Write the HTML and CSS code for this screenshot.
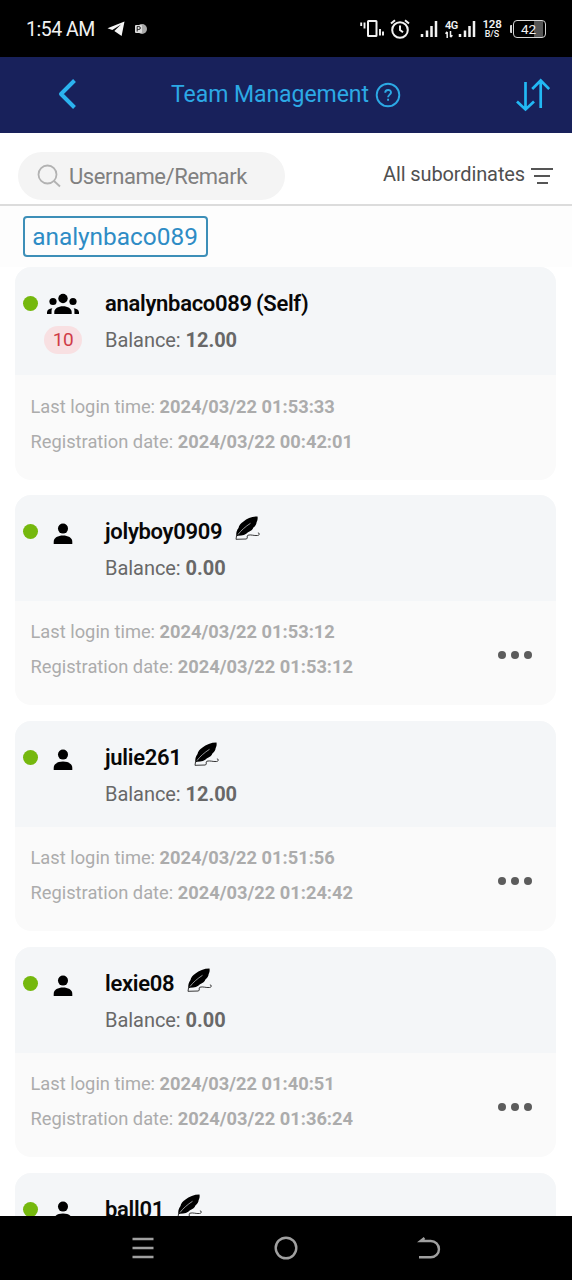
FILE: index.html
```html
<!DOCTYPE html>
<html lang="en">
<head>
    <meta charset="UTF-8">
    <meta name="viewport" content="width=device-width, initial-scale=1.0">
    <title>Team Management</title>
    <link rel="stylesheet" href="styles.css">
</head>
<body>
    <!-- shared icons -->
    <svg class="sprite" width="0" height="0">
        <symbol id="user" viewBox="0 0 20 22">
            <circle cx="10" cy="5.6" r="5"/>
            <path d="M.7 21v-2.2c0-4 4.4-6.2 9.3-6.2s9.3 2.2 9.3 6.2V21z"/>
        </symbol>
        <symbol id="feather" viewBox="0 0 26 26">
            <path d="M22.500.5C17 .5 12 2.500 8.500 5.500 5.500 7.300 4 9.500 3.500 12 1.500 14.500 1 17.500 1.300 20.500L3 19.800c4.500 0 8-1.200 10-3.600 2.900-1 4.700-2.700 5.400-4.700 2-1.500 3-3.400 3.200-5.300C22.600 4.300 22.900 2.500 22.500.5z"/>
            <path d="M3 18.500C6 14.500 10.500 10.500 15.500 7.300" fill="none" stroke="#d5d8db" stroke-width=".7"/>
            <path d="M1.500 20 1 23.300l10.500-.3c1.800-1.300-.3-2.800 1.400-3.800 3.100-.9 5.900.7 9.600.3 2.600-.5 2.300-2.500.4-2.600" fill="none" stroke="#222" stroke-width=".9"/>
        </symbol>
        <symbol id="signal" viewBox="0 0 18 18">
            <path d="M2 14v3M7 10.500V17M11.500 6v11M16 1v16" fill="none" stroke="#f2f2f2" stroke-width="2.500"/>
        </symbol>
    </svg>

    <div class="status-bar">
        <span class="clock">1:54 AM</span>
        <svg class="telegram" width="18" height="16" viewBox="0 0 18 16"><path d="M17.500.5.5 7.200l4.800 1.900L14 3.500 7.300 10l7.300 5z" fill="#f5f5f5"/></svg>
        <svg class="app-icon" width="12" height="12" viewBox="0 0 12 12">
            <circle cx="7" cy="6" r="5" fill="#aaa"/>
            <rect x="0" y="2" width="7" height="8" rx="1" fill="#ddd"/>
            <path d="M2.200 8.500v-5h1.600a1.500 1.500 0 0 1 0 3H2.200" fill="none" stroke="#222" stroke-width="1"/>
        </svg>
        <div class="status-right">
            <svg class="vibrate" width="24" height="20" viewBox="0 0 24 20" fill="none" stroke="#f2f2f2" stroke-width="2">
                <rect x="8" y="2" width="8.500" height="15" rx=".5"/>
                <path d="M1.200 3.500v3.500M4.500 3.500v6M20 10v6.500M23 12.500v4" stroke-width="1.900"/>
            </svg>
            <svg class="alarm" width="20" height="20" viewBox="0 0 20 20" fill="none" stroke="#f2f2f2" stroke-width="2">
                <circle cx="10" cy="11" r="7.800"/>
                <path d="M10 6.500V11l3 2.300M1 4.500 5 1.200M15 1.200l4 3.300"/>
            </svg>
            <svg class="bars" width="18" height="18"><use href="#signal"/></svg>
            <div class="network">
                <span>4G</span>
                <svg width="8" height="7" viewBox="0 0 8 7" fill="none" stroke="#f2f2f2" stroke-width="1.500"><path d="M2.200 7V1M.5 2.700 2.200.8M5.500 0v6M5.500 6.200l1.900-1.900"/></svg>
            </div>
            <svg class="bars-two" width="18" height="18"><use href="#signal"/></svg>
            <div class="speed"><b>128</b><span>B/S</span></div>
            <div class="battery-wrap">
                <i class="nub"></i>
                <div class="battery">42</div>
            </div>
        </div>
    </div>

    <header class="header">
        <svg class="back" width="20" height="32" viewBox="0 0 20 32" fill="none" stroke="#2bb3ef" stroke-width="4"><path d="M17.500 2.500 4 16l13.500 13.500" stroke-linejoin="round"/></svg>
        <h1>Team Management</h1>
        <svg class="help" width="26" height="26" viewBox="0 0 26 26" fill="none" stroke="#2ca9e5" stroke-width="1.900">
            <circle cx="13" cy="13" r="11.300"/>
            <path d="M10.200 10.800c0-3.800 5.800-3.600 5.800-.3 0 2-2.900 2.300-2.900 4.700M13.100 16.800v2"/>
        </svg>
        <svg class="sort" width="34" height="34" viewBox="0 0 34 34" fill="none" stroke="#22b8f4" stroke-width="2.700"><path d="M9.500 4v27M1 23.500l8.500 8 8.500-8M24.700 30V3M16.200 11l8.500-8.500 8.500 8.500"/></svg>
    </header>

    <div class="toolbar">
        <div class="search">
            <svg width="25" height="24" viewBox="0 0 25 24" fill="none" stroke="#b2b2b2" stroke-width="1.800"><circle cx="10.500" cy="10.500" r="9"/><path d="m17 17 6 5.500"/></svg>
            <span>Username/Remark</span>
        </div>
        <div class="filter">
            <span>All subordinates</span>
            <svg width="22" height="18" viewBox="0 0 22 18" stroke="#555" stroke-width="2"><path d="M0 2h22M3 9h16M6 16h11"/></svg>
        </div>
    </div>

    <main class="content">
        <div class="crumbs"><span class="crumb">analynbaco089</span></div>

        <section class="card self">
            <div class="card-head">
                <i class="dot"></i>
                <div class="avatar">
                    <svg class="group" width="34" height="22" viewBox="0 0 34 22">
                        <circle cx="17" cy="5.500" r="4.700"/><circle cx="7" cy="8.500" r="3.600"/><circle cx="27" cy="8.500" r="3.600"/>
                        <path d="M8.300 21v-2c0-3.500 4-5.800 8.700-5.800s8.700 2.300 8.700 5.800v2zM1 21v-1.500c0-2.500 2.200-4 5.300-4.200C5.100 17 5.800 19 5.500 21zM33 21v-1.500c0-2.500-2.200-4-5.300-4.200 1.200 1.700.5 3.700.8 5.700z"/>
                    </svg>
                    <span class="count">10</span>
                </div>
                <div class="info">
                    <h2>analynbaco089 (Self)</h2>
                    <p>Balance: <b>12.00</b></p>
                </div>
            </div>
            <div class="card-body">
                <p>Last login time: <b>2024/03/22 01:53:33</b></p>
                <p>Registration date: <b>2024/03/22 00:42:01</b></p>
            </div>
        </section>

        <section class="card">
            <div class="card-head">
                <i class="dot"></i>
                <div class="avatar"><svg width="20" height="22"><use href="#user"/></svg></div>
                <div class="info">
                    <h2>jolyboy0909 <svg class="feather" width="26" height="26"><use href="#feather"/></svg></h2>
                    <p>Balance: <b>0.00</b></p>
                </div>
            </div>
            <div class="card-body">
                <p>Last login time: <b>2024/03/22 01:53:12</b></p>
                <p>Registration date: <b>2024/03/22 01:53:12</b></p>
                <div class="more"><i></i><i></i><i></i></div>
            </div>
        </section>

        <section class="card">
            <div class="card-head">
                <i class="dot"></i>
                <div class="avatar"><svg width="20" height="22"><use href="#user"/></svg></div>
                <div class="info">
                    <h2>julie261 <svg class="feather" width="26" height="26"><use href="#feather"/></svg></h2>
                    <p>Balance: <b>12.00</b></p>
                </div>
            </div>
            <div class="card-body">
                <p>Last login time: <b>2024/03/22 01:51:56</b></p>
                <p>Registration date: <b>2024/03/22 01:24:42</b></p>
                <div class="more"><i></i><i></i><i></i></div>
            </div>
        </section>

        <section class="card">
            <div class="card-head">
                <i class="dot"></i>
                <div class="avatar"><svg width="20" height="22"><use href="#user"/></svg></div>
                <div class="info">
                    <h2>lexie08 <svg class="feather" width="26" height="26"><use href="#feather"/></svg></h2>
                    <p>Balance: <b>0.00</b></p>
                </div>
            </div>
            <div class="card-body">
                <p>Last login time: <b>2024/03/22 01:40:51</b></p>
                <p>Registration date: <b>2024/03/22 01:36:24</b></p>
                <div class="more"><i></i><i></i><i></i></div>
            </div>
        </section>

        <section class="card">
            <div class="card-head">
                <i class="dot"></i>
                <div class="avatar"><svg width="20" height="22"><use href="#user"/></svg></div>
                <div class="info">
                    <h2>ball01 <svg class="feather" width="26" height="26"><use href="#feather"/></svg></h2>
                </div>
            </div>
        </section>
    </main>

    <nav class="nav-bar">
        <svg width="24" height="24" viewBox="0 0 24 24" fill="none" stroke="#a0a0a0" stroke-width="2.400"><path d="M1.500 3h21M1.500 12h21M1.500 21h21"/></svg>
        <svg width="24" height="24" viewBox="0 0 24 24" fill="none" stroke="#a0a0a0" stroke-width="2.400"><circle cx="12" cy="12" r="10.300"/></svg>
        <svg width="24" height="24" viewBox="0 0 24 24" fill="none" stroke="#a0a0a0" stroke-width="2.400"><path d="M7.500 2 3.500 5h10.300a8.100 8.100 0 0 1 0 16.300H2"/></svg>
    </nav>
</body>
</html>
```
FILE: styles.css
```css
* {
    box-sizing: border-box;
}
body {
    margin: 0;
    height: 1280px;
    display: flex;
    flex-direction: column;
    overflow: hidden;
    font-family: Roboto, "Liberation Sans", sans-serif;
    background-color: #fff;
}
h1, h2, p {
    margin: 0;
}
svg {
    display: block;
    flex: none;
}
.sprite {
    position: absolute;
}

/* phone status bar */
.status-bar {
    flex: none;
    height: 57px;
    padding: 1px 26px 0;
    display: flex;
    align-items: center;
    background-color: #000;
    color: #f2f2f2;
}
.clock {
    font-size: 19.5px;
    letter-spacing: -0.5px;
}
.telegram {
    margin-left: 12px;
}
.app-icon {
    margin-left: 10px;
}
.status-right {
    margin-left: auto;
    display: flex;
    align-items: center;
}
.alarm {
    margin-left: 6px;
}
.bars {
    margin-left: 10px;
}
.network {
    margin-left: 7px;
    width: 13px;
    font-size: 11px;
    font-weight: 600;
    line-height: 11px;
    letter-spacing: -0.5px;
}
.speed {
    margin-left: 6px;
    width: 20px;
    display: flex;
    flex-direction: column;
    align-items: center;
    font-size: 9px;
    font-weight: 500;
    line-height: 10px;
}
.speed b {
    font-size: 11.5px;
    font-weight: 600;
    letter-spacing: -0.3px;
}
.battery-wrap {
    margin-left: 8px;
    display: flex;
    align-items: center;
    gap: 1px;
}
.nub {
    width: 2px;
    height: 8px;
    border-radius: 1px 0 0 1px;
    background-color: #d5d5d5;
}
.battery {
    width: 33px;
    height: 18px;
    padding-right: 2px;
    border: 1.5px solid #d5d5d5;
    border-radius: 4px;
    background: linear-gradient(to right, transparent 64%, #555 64%, #555 92%, transparent 92%);
    font-size: 13.5px;
    line-height: 16px;
    text-align: center;
}

.header {
    flex: none;
    height: 76px;
    padding: 0 22px 2px 57px;
    display: flex;
    align-items: center;
    background-color: #18215b;
}
.header h1 {
    margin: 2px 0 0 94px;
    width: 198px;
    font-size: 23px;
    font-weight: 400;
    line-height: 28px;
    white-space: nowrap;
    letter-spacing: -0.05px;
    color: #2ca9e5;
}
.help {
    margin: 2px 0 0 6px;
}
.sort {
    margin: 2px 0 0 auto;
}

.toolbar {
    flex: none;
    height: 73px;
    padding: 4px 19px 0 18px;
    display: flex;
    align-items: center;
    justify-content: space-between;
    border-bottom: 2px solid #dcdcdc;
}
.search {
    margin-top: 10px;
    width: 267px;
    height: 48px;
    padding: 1px 0 0 19px;
    display: flex;
    align-items: center;
    gap: 7px;
    border-radius: 24px;
    background-color: #f4f4f4;
    color: #808080;
    font-size: 22px;
    letter-spacing: -0.4px;
}
.filter {
    display: flex;
    align-items: center;
    gap: 6px;
    margin-top: 6px;
    color: #505050;
    font-size: 20px;
    letter-spacing: -0.12px;
}
.filter svg {
    margin-top: 4px;
}

.content {
    flex: 1;
    min-height: 0;
    overflow: hidden;
    padding: 0 16px 0 15px;
}
.crumbs {
    height: 61px;
    margin: 0 -16px 0 -15px;
    padding: 10px 23px 0;
    background-color: #fdfdfd;
}
.crumb {
    display: inline-block;
    width: 185px;
    height: 41px;
    padding-right: 1px;
    border: 2px solid #3d8fb8;
    border-radius: 4px;
    text-align: center;
    font-size: 24.4px;
    line-height: 37px;
    color: #2e8cc5;
}

.card {
    height: 210px;
    margin-bottom: 16px;
    border-radius: 16px;
    overflow: hidden;
    background-color: #fafafa;
}
.card-head {
    height: 106px;
    padding: 19px 8px 0;
    display: flex;
    background-color: #f4f6f8;
}
.self {
    height: 213px;
    margin-bottom: 15px;
}
.self .card-head {
    height: 108px;
}
.self .card-body {
    padding-top: 15px;
}
.dot {
    flex: none;
    width: 15px;
    height: 15px;
    margin-top: 10px;
    border-radius: 50%;
    background-color: #75b80e;
}
.avatar {
    width: 50px;
    padding-top: 9px;
    display: flex;
    flex-direction: column;
    align-items: center;
}
.group {
    margin-top: -2px;
}
.count {
    width: 38px;
    height: 28px;
    margin-top: 11px;
    border-radius: 14px;
    background-color: #f8e0e2;
    color: #cf3c46;
    font-size: 19px;
    line-height: 28px;
    letter-spacing: -0.4px;
    text-align: center;
}
.info {
    margin-left: 17px;
    line-height: 36px;
    color: #686868;
    font-size: 20px;
    letter-spacing: -0.05px;
}
.self p {
    position: static;
}
.info h2 {
    display: flex;
    height: 36px;
    font-size: 22px;
    font-weight: 600;
    letter-spacing: -0.3px;
    word-spacing: -1px;
    color: #080808;
}
.feather {
    margin: 2px 0 0 13px;
}
.self .info {
    margin-top: -0.5px;
}
.card-body {
    position: relative;
    padding: 14px 15.5px 0;
    font-size: 18.3px;
    line-height: 34.5px;
    color: #acacac;
}
/* row menu button */
.more {
    position: absolute;
    right: 24px;
    top: 50px;
    display: flex;
    gap: 5px;
}
.more i {
    width: 8px;
    height: 8px;
    border-radius: 50%;
    background-color: #5c5c5c;
}

.nav-bar {
    flex: none;
    height: 64px;
    padding: 0 71px;
    display: flex;
    align-items: center;
    justify-content: space-around;
    background-color: #000;
}
```
